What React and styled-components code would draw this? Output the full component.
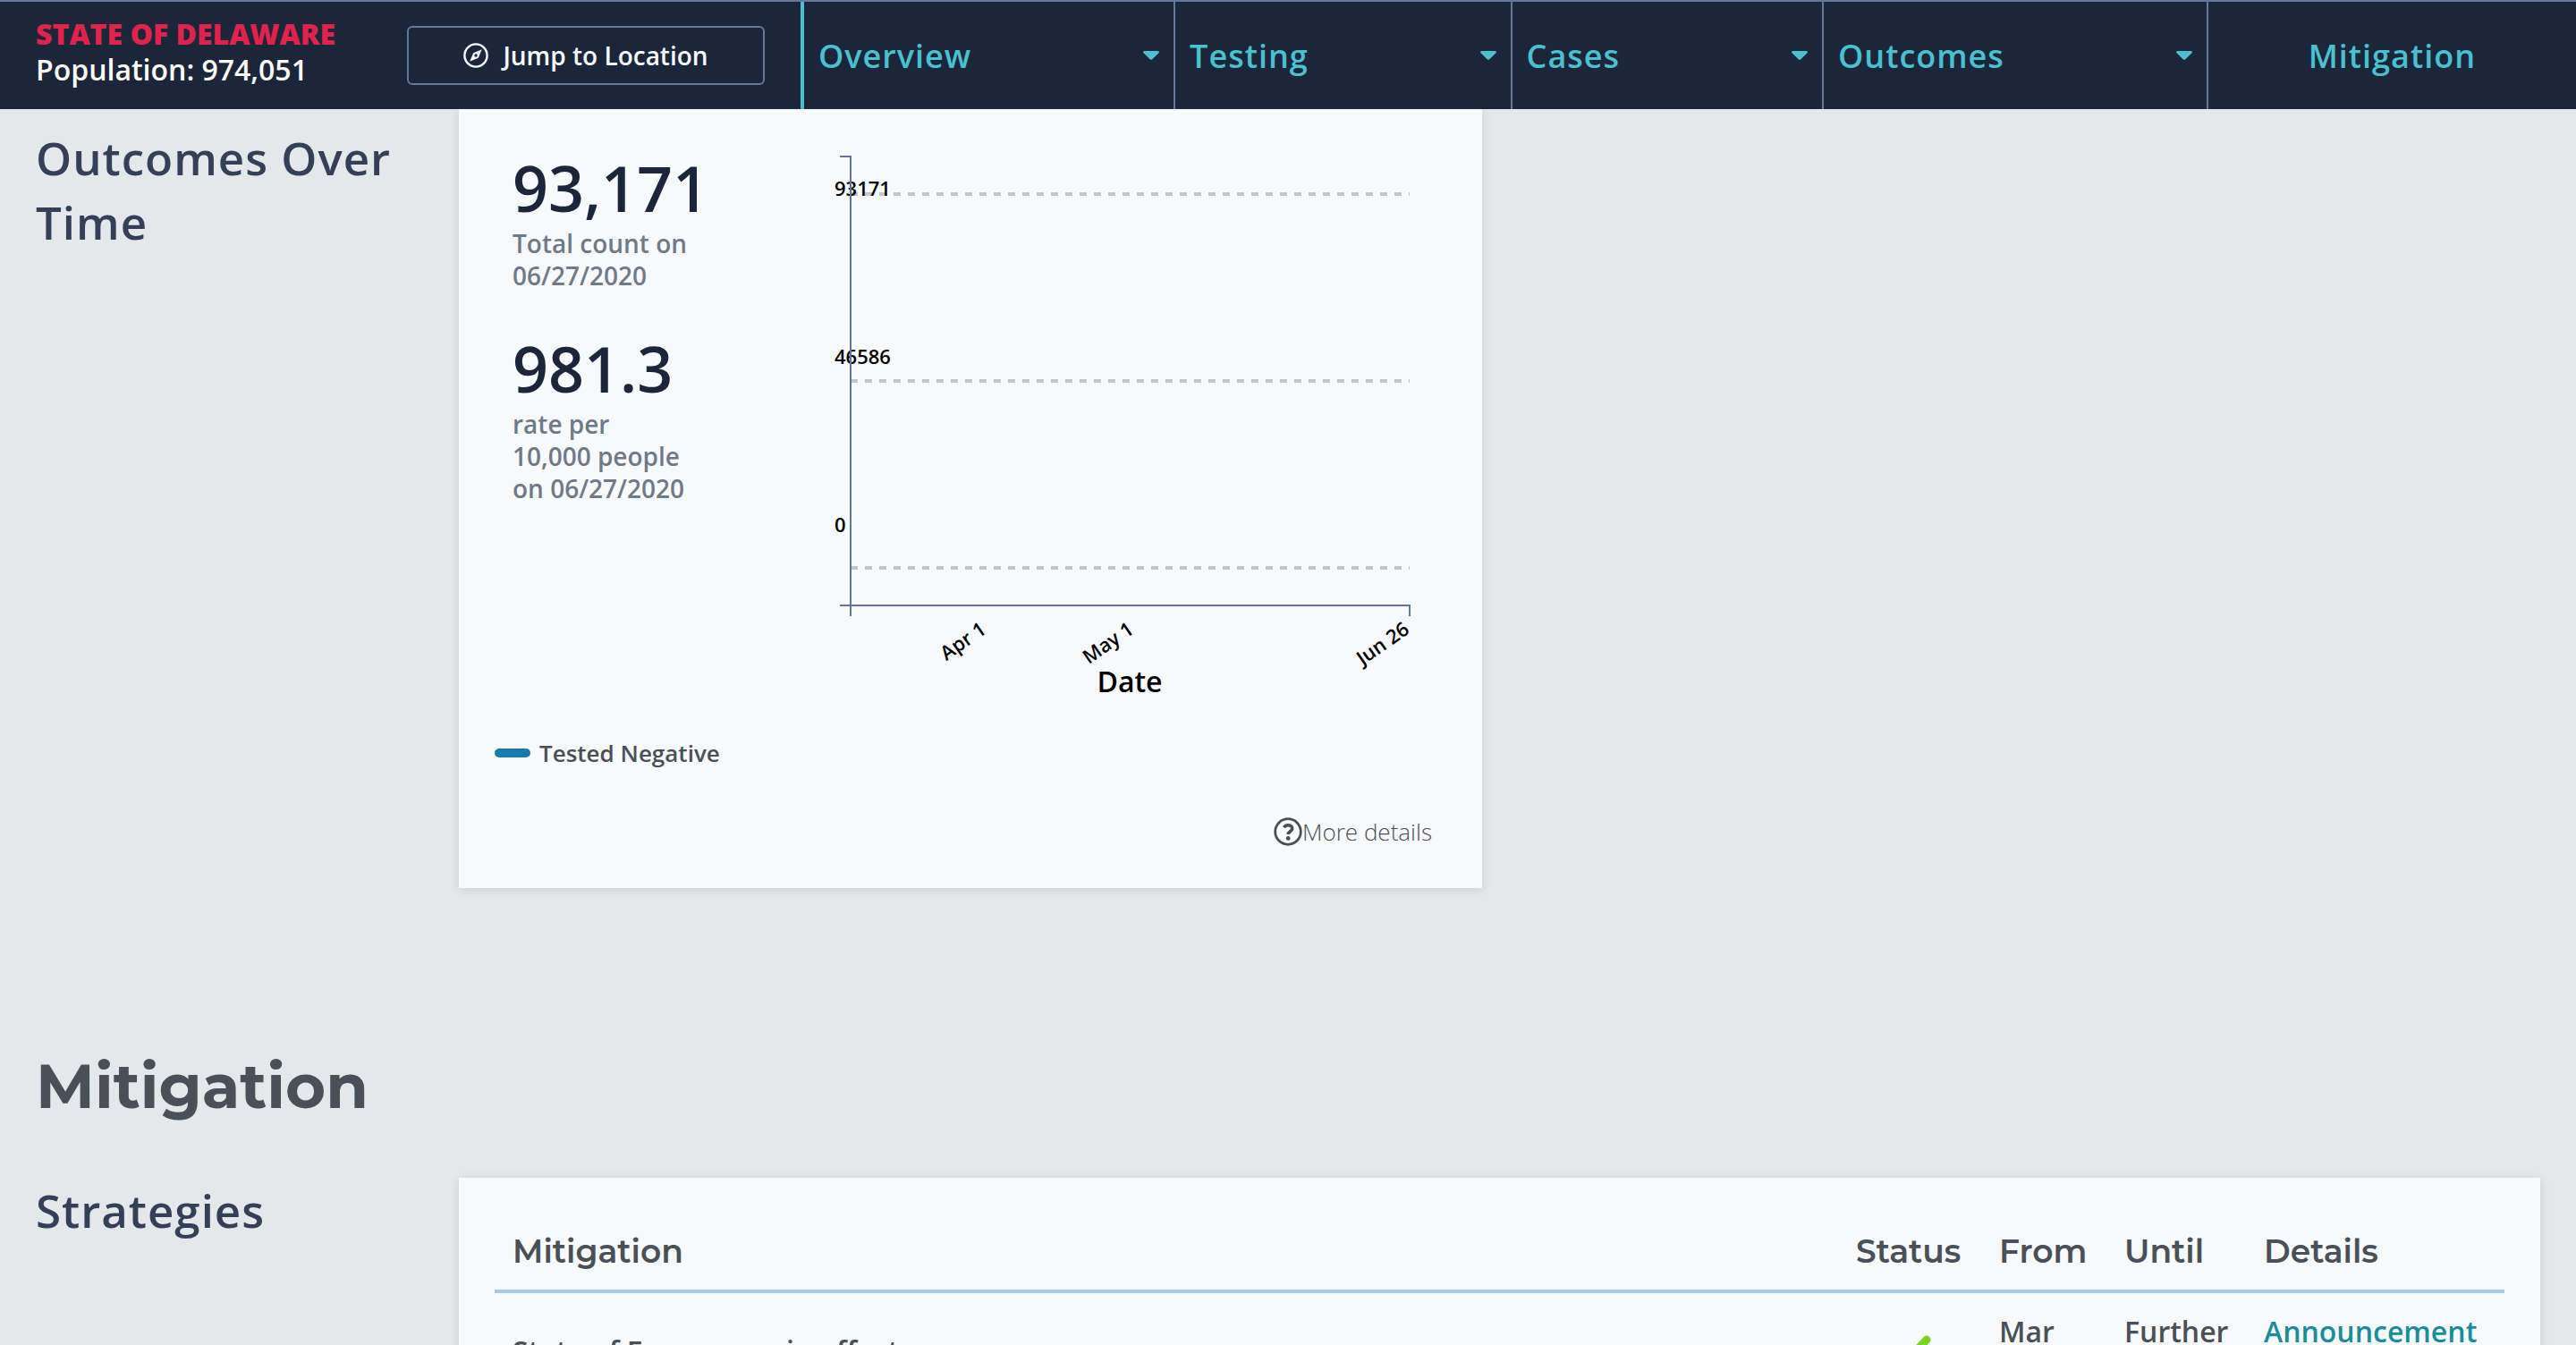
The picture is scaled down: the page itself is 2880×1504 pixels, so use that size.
import React from "react";
import styled, { createGlobalStyle } from "styled-components";

const Global = createGlobalStyle`
  * { box-sizing: border-box; }
  html, body { margin: 0; height: 100%; }
  body {
    background: #e4e8eb;
    color: #4a5058;
    font-family: "Open Sans", "Noto Sans", sans-serif;
    overflow: hidden;
  }
  #root { height: 100%; }
`;

const Page = styled.div`
  height: 100%;
  overflow: hidden;
`;

const Header = styled.header`
  display: flex;
  height: 122px;
  background: #1b263b;
  border-top: 2px solid #64779d;
`;

const Place = styled.div`
  display: flex;
  align-items: center;
  justify-content: space-between;
  width: 895px;
  flex: none;
  padding: 0 40px;
`;

const PlaceText = styled.div`
  padding-bottom: 8px;
  font-size: 32px;
  line-height: 40px;
  font-weight: 600;
  color: #fffcf5;
`;

const PlaceName = styled.div`
  font-weight: 800;
  text-transform: uppercase;
  color: #e0234c;
`;

const JumpButton = styled.button`
  display: flex;
  align-items: center;
  justify-content: center;
  gap: 16px;
  width: 400px;
  height: 66px;
  background: transparent;
  border: 2px solid #64779d;
  border-radius: 6px;
  color: #f8f9fb;
  font: 600 28px/40px "Open Sans", sans-serif;
`;

const Nav = styled.nav`
  display: flex;
  flex: 1;
  border-left: 4px solid #4bc0d0;
`;

const NavItem = styled.a`
  display: flex;
  flex: 1 1 auto;
  align-items: center;
  justify-content: ${(p) => (p.$menu ? "space-between" : "center")};
  padding: 0 16px;
  border-right: ${(p) => (p.$menu ? "2px solid #64779d" : "none")};
  color: #4bc0d0;
  font-size: 36px;
  font-weight: 600;
  letter-spacing: 1px;
  text-decoration: none;
`;

const Section = styled.section`
  display: grid;
  grid-template-columns: 433px minmax(0, 1fr);
  column-gap: 40px;
  padding: 0 40px;
`;

const SectionTitle = styled.h2`
  margin: 0;
  padding-top: ${(p) => (p.$underHeader ? "18px" : "0")};
  font-size: 51px;
  line-height: 72px;
  font-weight: 600;
  letter-spacing: 1px;
  color: #343f58;
`;

const ChapterTitle = styled.h1`
  margin: 0;
  padding: 176px 40px 58px;
  font: 700 69px/90px Montserrat, Inter, sans-serif;
  color: #4a5058;
`;

const Card = styled.div`
  background: #f8f9fb;
  box-shadow: 0 2px 10px rgba(60, 60, 90, 0.14);
`;

const OutcomeCard = styled(Card)`
  width: 1144px;
  max-width: 100%;
  padding: 40px 56px 43px 40px;
`;

const Columns = styled.div`
  display: flex;
  justify-content: space-between;
`;

const Stats = styled.div`
  display: flex;
  flex-direction: column;
  gap: 46px;
  padding: 8px 20px;
`;

const Value = styled.div`
  font-size: 70px;
  line-height: 80px;
  font-weight: 600;
  color: #1b263b;
`;

const Caption = styled.div`
  padding-top: 4px;
  font-size: 28px;
  line-height: 36px;
  font-weight: 600;
  color: #6f7a88;
`;

const Chart = styled.svg`
  display: block;
  font-family: "Open Sans", sans-serif;
  font-weight: 600;
`;

const Legend = styled.div`
  display: flex;
  align-items: center;
  gap: 10px;
  padding-top: 34px;
  font-size: 26px;
  line-height: 40px;
  font-weight: 600;
`;

const Swatch = styled.span`
  width: 40px;
  height: 10px;
  border-radius: 5px;
  background: #157ab0;
`;

const MoreButton = styled.button`
  display: flex;
  align-items: center;
  margin: 48px 0 0 auto;
  padding: 0;
  border: 0;
  background: none;
  color: #4a5058;
  font: 300 26px/40px "Open Sans", sans-serif;
`;

const TableCard = styled(Card)`
  padding: 39px 40px 0;
`;

const Table = styled.table`
  width: 100%;
  border-collapse: collapse;
  table-layout: fixed;
`;

const Col = styled.col`
  width: ${(p) => p.$w};
`;

const Th = styled.th`
  height: 88px;
  padding: 0 20px;
  border-bottom: 4px solid #a4cbdf;
  text-align: left;
  white-space: nowrap;
  font: 600 36px/48px Montserrat, Inter, sans-serif;
`;

const Td = styled.td`
  padding: 21px 20px;
  vertical-align: ${(p) => (p.$top ? "top" : "middle")};
  font-size: 32px;
  line-height: 44px;
  font-weight: 600;
  text-align: ${(p) => (p.$center ? "center" : "left")};
`;

const DetailLink = styled.a`
  color: #188d9c;
  text-decoration: none;
`;

const Caret = () => (
  <svg width="18" height="10" viewBox="0 0 18 10" aria-hidden="true">
    <path d="M1.5 0h15c1.2 0 1.8 1.300 1 2.200L10.300 9.300c-.7.700-1.900.700-2.600 0L.5 2.200C-.3 1.300.300 0 1.500 0z" fill="currentColor" />
  </svg>
);

const Compass = () => (
  <svg width="28" height="28" viewBox="0 0 28 28" fill="none" aria-hidden="true">
    <circle cx="14" cy="14" r="12.600" stroke="currentColor" strokeWidth="2.400" />
    <path d="M20.800 7.200l-4 9.600-9.600 4 4-9.600z" fill="currentColor" />
    <circle cx="14" cy="14" r="1.700" fill="#1b263b" />
  </svg>
);

const Question = () => (
  <svg width="32" height="32" viewBox="0 0 32 32" fill="none" aria-hidden="true">
    <circle cx="16" cy="16" r="14.300" stroke="currentColor" strokeWidth="2.800" />
    <path d="M11.400 11.200c1-1.600 2.600-2.500 4.600-2.500 2.800 0 4.700 1.500 4.700 3.700 0 3.300-4.500 3.400-4.500 6.600" stroke="currentColor" strokeWidth="3.600" />
    <circle cx="16.200" cy="23.400" r="2.400" fill="currentColor" />
  </svg>
);

const Check = () => (
  <svg width="60" height="50" viewBox="0 0 60 50" fill="none" aria-hidden="true">
    <path d="M10 32l13 13L49 17" stroke="#7ed321" strokeWidth="9" strokeLinecap="round" strokeLinejoin="round" />
  </svg>
);

const menus = ["Overview", "Testing", "Cases", "Outcomes"];
const yTicks = [
  { label: "93171", text: 57, line: 55 },
  { label: "46586", text: 245, line: 264 },
  { label: "0", text: 433, line: 473 },
];
const xTicks = [
  { label: "Apr 1", x: 171 },
  { label: "May 1", x: 336 },
  { label: "Jun 26", x: 644 },
];

const OutcomeChart = () => (
  <Chart width="668" height="626" viewBox="0 0 668 626" role="img" aria-label="Outcomes over time">
    {yTicks.map((t) => (
      <g key={t.label}>
        <path d={`M18 ${t.line}H643`} stroke="#c4c5cc" strokeWidth="4" strokeDasharray="8 8" />
        <text x="0" y={t.text} fontSize="22">{t.label}</text>
      </g>
    ))}
    <path d="M6 13H18V527" fill="none" stroke="#627699" strokeWidth="2" />
    <path d="M6 515H643V527" fill="none" stroke="#627699" strokeWidth="2" />
    {xTicks.map((t) => (
      <text key={t.label} transform={`translate(${t.x} 545) rotate(-35)`} textAnchor="end" fontSize="22">{t.label}</text>
    ))}
    <text x="330" y="612" textAnchor="middle" fontSize="32">Date</text>
  </Chart>
);

export default function App() {
  return (
    <Page>
      <Global />
      <Header>
        <Place>
          <PlaceText>
            <PlaceName>State of Delaware</PlaceName>
            Population: 974,051
          </PlaceText>
          <JumpButton type="button">
            <Compass />
            Jump to Location
          </JumpButton>
        </Place>
        <Nav>
          {menus.map((m) => (
            <NavItem key={m} href="#" $menu>
              {m}
              <Caret />
            </NavItem>
          ))}
          <NavItem href="#">Mitigation</NavItem>
        </Nav>
      </Header>
      <Section>
        <SectionTitle $underHeader>Outcomes Over Time</SectionTitle>
        <OutcomeCard>
          <Columns>
            <Stats>
              <div>
                <Value>93,171</Value>
                <Caption>Total count on<br />06/27/2020</Caption>
              </div>
              <div>
                <Value>981.3</Value>
                <Caption>rate per<br />10,000 people<br />on 06/27/2020</Caption>
              </div>
            </Stats>
            <OutcomeChart />
          </Columns>
          <Legend>
            <Swatch />
            Tested Negative
          </Legend>
          <MoreButton type="button">
            <Question />
            More details
          </MoreButton>
        </OutcomeCard>
      </Section>
      <ChapterTitle>Mitigation</ChapterTitle>
      <Section>
        <SectionTitle>Strategies</SectionTitle>
        <TableCard>
          <Table>
            <colgroup>
              <Col $w="auto" />
              <Col $w="160px" />
              <Col $w="140px" />
              <Col $w="156px" />
              <Col $w="289px" />
            </colgroup>
            <thead>
              <tr>
                <Th>Mitigation</Th>
                <Th>Status</Th>
                <Th>From</Th>
                <Th>Until</Th>
                <Th>Details</Th>
              </tr>
            </thead>
            <tbody>
              <tr>
                <Td>State of Emergency in effect</Td>
                <Td $center><Check /></Td>
                <Td>Mar<br />12</Td>
                <Td>Further<br />notice</Td>
                <Td $top><DetailLink href="#">Announcement</DetailLink></Td>
              </tr>
            </tbody>
          </Table>
        </TableCard>
      </Section>
    </Page>
  );
}
